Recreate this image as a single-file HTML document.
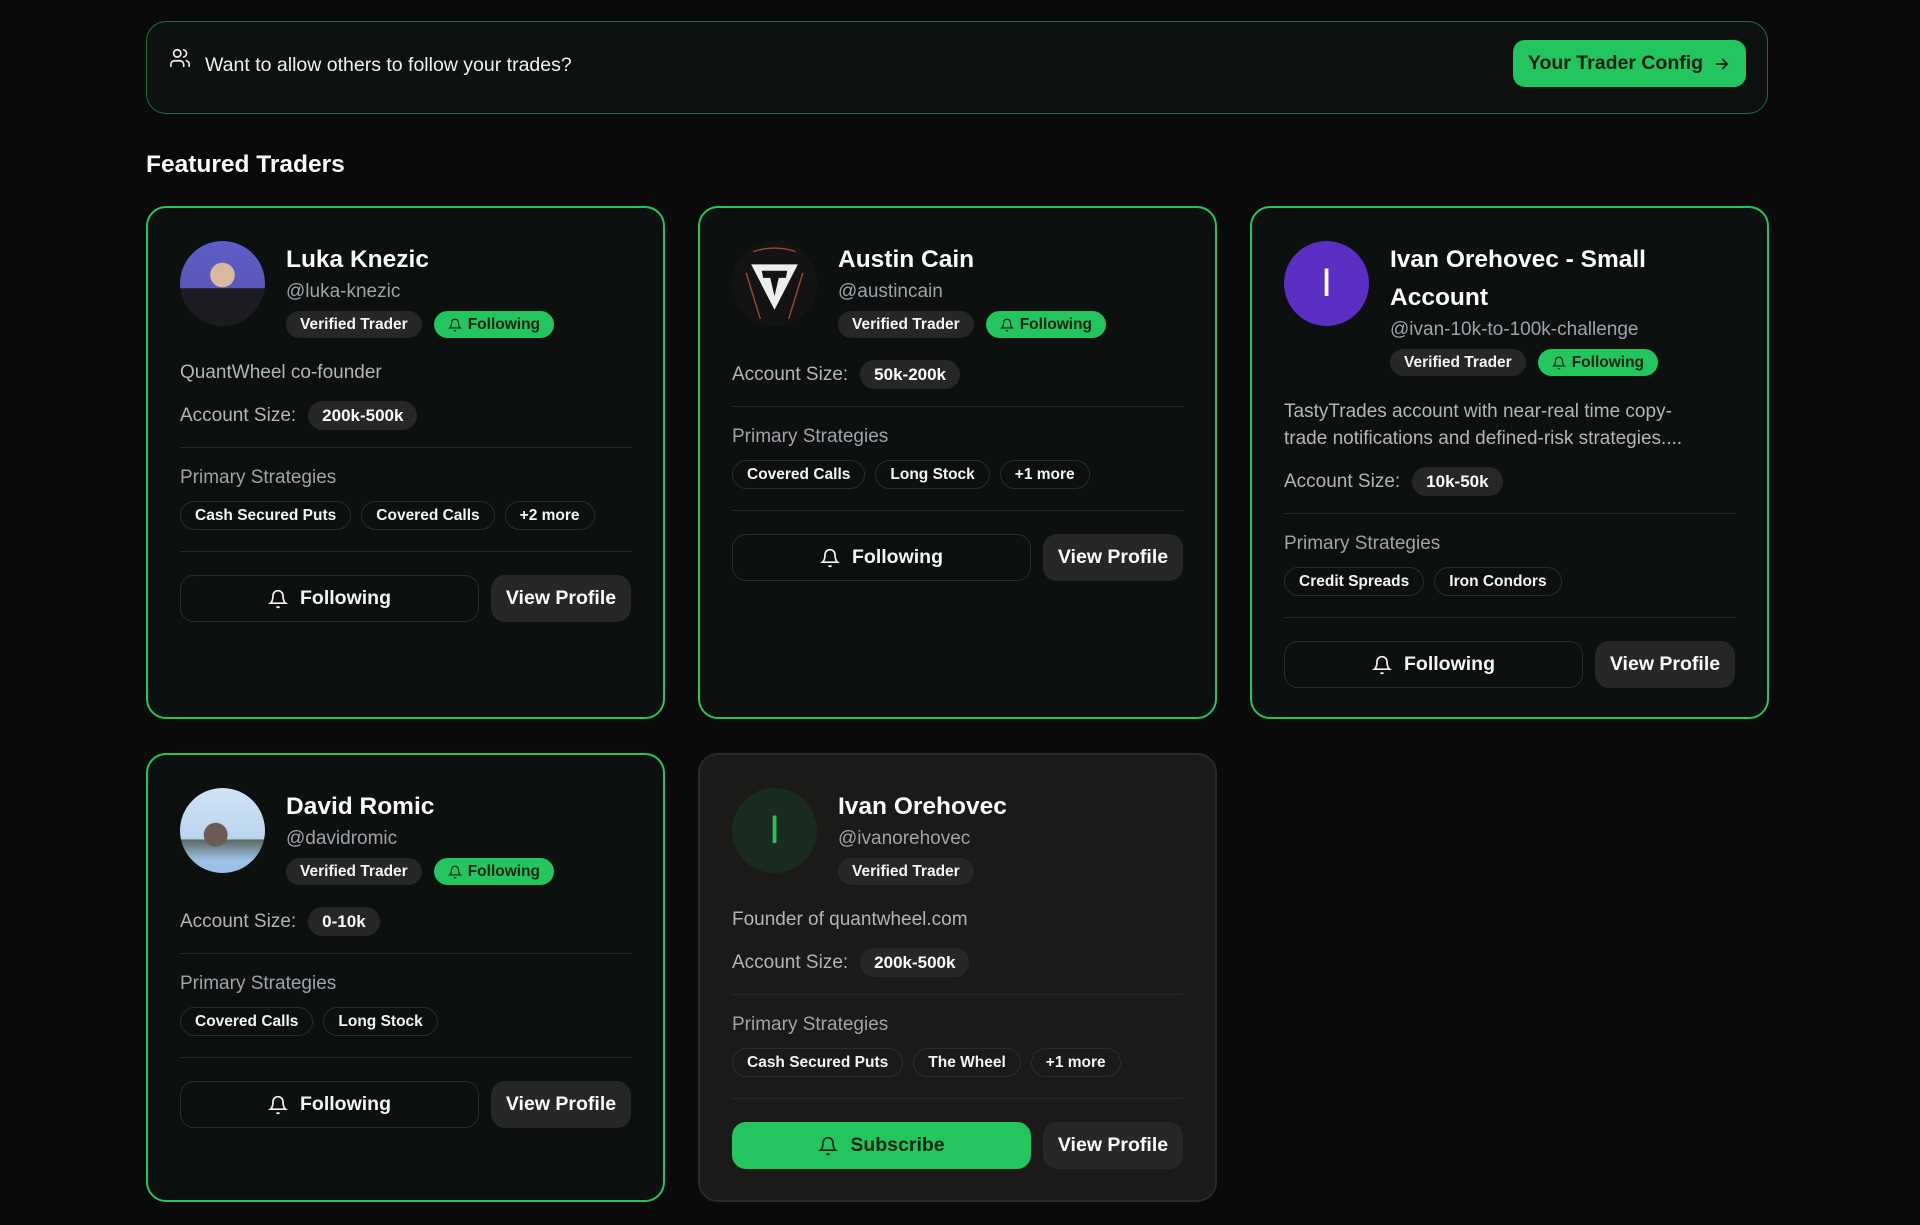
<!DOCTYPE html>
<html><head><meta charset="utf-8"><style>
*{box-sizing:border-box;margin:0;padding:0}
body{width:1920px;height:1225px;background:#0a0a0a;font-family:"Liberation Sans",sans-serif;color:#fafafa;position:relative;overflow:hidden}
.banner{position:absolute;left:146px;top:21px;width:1622px;height:93px;border:1.5px solid #1f6b3c;border-radius:20px;background:#0d1210}
.banner .t{position:absolute;left:58px;top:0;line-height:86px;font-size:19.5px;color:#f1f1f1}
.banner svg.ic{position:absolute;left:22px;top:25px}
.cfg{position:absolute;right:21px;top:18px;width:233px;height:47px;border-radius:12px;background:#22c55e;color:#0a1f12;font-size:19.5px;font-weight:600;display:flex;align-items:center;justify-content:center;gap:10px}
h2{position:absolute;left:146px;top:149px;font-size:24.5px;font-weight:600;line-height:32px}
.card{position:absolute;width:519px;border:2.5px solid #22c55e;border-radius:20px;background:#0c100e;padding:33px 32px 0 32px}
.card.plain{border:2px solid #2a2a2a;background:#1c1a19}
.hd{display:flex;gap:21px}
.av{width:85px;height:85px;border-radius:50%;flex:none;display:flex;align-items:center;justify-content:center;font-size:40px;overflow:hidden}
.nm{font-size:24.5px;font-weight:600;line-height:38px}
.hn{font-size:19px;color:#a1a1aa;line-height:26px}
.bd{display:flex;gap:12px;margin-top:6px}
.b{height:27px;border-radius:14px;padding:0 14px;font-size:15.5px;font-weight:600;display:flex;align-items:center;background:#27272a;color:#f4f4f5}
.b.g{background:#22c55e;color:#0b2414;gap:6px;padding:0 14px}
.desc{font-size:19px;color:#b4b4b8;line-height:27px;margin-top:21px}
.acc{display:flex;align-items:center;gap:12px;font-size:19px;color:#b4b4b8;margin-top:15px;height:29px}
.acc.first{margin-top:22px}
.acc span.p{background:#27272a;color:#fafafa;font-weight:600;font-size:17px;height:29px;border-radius:15px;padding:0 14px;display:flex;align-items:center}
.hr{height:1px;background:#26282a;margin-top:17px}
.ps{font-size:19px;color:#a1a1aa;line-height:29px;margin-top:15px}
.pills{display:flex;gap:10px;margin-top:9px}
.pl{height:29px;border:1.5px solid #2a2d2f;border-radius:15px;padding:0 14px;font-size:15.5px;font-weight:600;display:flex;align-items:center;color:#f4f4f5}
.hr2{height:1px;background:#26282a;margin-top:21px}
.btns{display:flex;gap:12px;margin-top:23px}
.fb{width:299px;height:47px;border:1.5px solid #2a2d2f;border-radius:14px;display:flex;align-items:center;justify-content:center;gap:12px;font-size:19.5px;font-weight:600;color:#f4f4f5}
.fb.s{background:#22c55e;border-color:#22c55e;color:#0b2414}
.vp{width:140px;height:47px;border-radius:14px;background:#27272a;display:flex;align-items:center;justify-content:center;font-size:19.5px;font-weight:600}
</style></head><body>
<div class="banner">
<svg class="ic" width="22" height="22" viewBox="0 0 24 24" fill="none" stroke="#eee" stroke-width="1.8" stroke-linecap="round"><circle cx="9" cy="7" r="4"/><path d="M2 21v-2a4 4 0 0 1 4-4h6a4 4 0 0 1 4 4v2"/><path d="M16 3.1a4 4 0 0 1 0 7.8"/><path d="M22 21v-2a4 4 0 0 0-3-3.9"/></svg>
<div class="t">Want to allow others to follow your trades?</div>
<div class="cfg">Your Trader Config <svg width="18" height="18" viewBox="0 0 24 24" fill="none" stroke="#0a1f12" stroke-width="2.2" stroke-linecap="round"><path d="M5 12h14M13 6l6 6-6 6"/></svg></div>
</div>
<h2>Featured Traders</h2>

<div class="card" style="left:146px;top:206px;height:513px">
 <div class="hd"><div class="av" style="background:radial-gradient(circle at 50% 40%,#d9b8a0 0 18%,transparent 19%),linear-gradient(180deg,#5b5fc7 0,#5a57b8 55%,#1c1c22 56%)"></div>
 <div><div class="nm">Luka Knezic</div><div class="hn">@luka-knezic</div>
 <div class="bd"><div class="b">Verified Trader</div><div class="b g"><svg width="14" height="14" viewBox="0 0 24 24" fill="none" stroke="#0b2414" stroke-width="2"><path d="M6 8a6 6 0 0 1 12 0c0 7 3 9 3 9H3s3-2 3-9"/><path d="M10.3 21a1.9 1.9 0 0 0 3.4 0"/></svg>Following</div></div></div></div>
 <div class="desc">QuantWheel co-founder</div>
 <div class="acc">Account Size: <span class="p">200k-500k</span></div>
 <div class="hr"></div>
 <div class="ps">Primary Strategies</div>
 <div class="pills"><div class="pl">Cash Secured Puts</div><div class="pl">Covered Calls</div><div class="pl">+2 more</div></div>
 <div class="hr2"></div>
 <div class="btns"><div class="fb"><svg width="20" height="20" viewBox="0 0 24 24" fill="none" stroke="#f4f4f5" stroke-width="2"><path d="M6 8a6 6 0 0 1 12 0c0 7 3 9 3 9H3s3-2 3-9"/><path d="M10.3 21a1.9 1.9 0 0 0 3.4 0"/></svg>Following</div><div class="vp">View Profile</div></div>
</div>

<div class="card" style="left:698px;top:206px;height:513px">
 <div class="hd"><div class="av" style="background:#141414"><svg width="85" height="85" viewBox="0 0 120 120"><circle cx="60" cy="60" r="58" fill="#131313"/><path d="M20 45 L40 110 M100 45 L80 110 M30 15 Q60 5 90 15" stroke="#9a4a2a" stroke-width="2" fill="none"/><path d="M27 33 L93 33 L60 97 Z" fill="#eee"/><path d="M42 42 L78 42 L76 52 L66 52 L60 78 L54 52 L44 52 Z" fill="#131313"/></svg></div>
 <div><div class="nm">Austin Cain</div><div class="hn">@austincain</div>
 <div class="bd"><div class="b">Verified Trader</div><div class="b g"><svg width="14" height="14" viewBox="0 0 24 24" fill="none" stroke="#0b2414" stroke-width="2"><path d="M6 8a6 6 0 0 1 12 0c0 7 3 9 3 9H3s3-2 3-9"/><path d="M10.3 21a1.9 1.9 0 0 0 3.4 0"/></svg>Following</div></div></div></div>
 <div class="acc first">Account Size: <span class="p">50k-200k</span></div>
 <div class="hr"></div>
 <div class="ps">Primary Strategies</div>
 <div class="pills"><div class="pl">Covered Calls</div><div class="pl">Long Stock</div><div class="pl">+1 more</div></div>
 <div class="hr2"></div>
 <div class="btns"><div class="fb"><svg width="20" height="20" viewBox="0 0 24 24" fill="none" stroke="#f4f4f5" stroke-width="2"><path d="M6 8a6 6 0 0 1 12 0c0 7 3 9 3 9H3s3-2 3-9"/><path d="M10.3 21a1.9 1.9 0 0 0 3.4 0"/></svg>Following</div><div class="vp">View Profile</div></div>
</div>

<div class="card" style="left:1250px;top:206px;height:513px">
 <div class="hd"><div class="av" style="background:#5b2fc4;color:#fff">I</div>
 <div><div class="nm">Ivan Orehovec - Small<br>Account</div><div class="hn">@ivan-10k-to-100k-challenge</div>
 <div class="bd"><div class="b">Verified Trader</div><div class="b g"><svg width="14" height="14" viewBox="0 0 24 24" fill="none" stroke="#0b2414" stroke-width="2"><path d="M6 8a6 6 0 0 1 12 0c0 7 3 9 3 9H3s3-2 3-9"/><path d="M10.3 21a1.9 1.9 0 0 0 3.4 0"/></svg>Following</div></div></div></div>
 <div class="desc" style="margin-top:22px">TastyTrades account with near-real time copy-<br>trade notifications and defined-risk strategies....</div>
 <div class="acc">Account Size: <span class="p">10k-50k</span></div>
 <div class="hr"></div>
 <div class="ps">Primary Strategies</div>
 <div class="pills"><div class="pl">Credit Spreads</div><div class="pl">Iron Condors</div></div>
 <div class="hr2"></div>
 <div class="btns"><div class="fb"><svg width="20" height="20" viewBox="0 0 24 24" fill="none" stroke="#f4f4f5" stroke-width="2"><path d="M6 8a6 6 0 0 1 12 0c0 7 3 9 3 9H3s3-2 3-9"/><path d="M10.3 21a1.9 1.9 0 0 0 3.4 0"/></svg>Following</div><div class="vp">View Profile</div></div>
</div>

<div class="card" style="left:146px;top:753px;height:449px">
 <div class="hd"><div class="av" style="background:radial-gradient(circle at 42% 55%,#6b5a55 0 17%,transparent 18%),linear-gradient(180deg,#cfe3f5 0,#b9d5ee 60%,#5b6a60 61%,#9cc0e6 85%)"></div>
 <div><div class="nm">David Romic</div><div class="hn">@davidromic</div>
 <div class="bd"><div class="b">Verified Trader</div><div class="b g"><svg width="14" height="14" viewBox="0 0 24 24" fill="none" stroke="#0b2414" stroke-width="2"><path d="M6 8a6 6 0 0 1 12 0c0 7 3 9 3 9H3s3-2 3-9"/><path d="M10.3 21a1.9 1.9 0 0 0 3.4 0"/></svg>Following</div></div></div></div>
 <div class="acc first">Account Size: <span class="p">0-10k</span></div>
 <div class="hr"></div>
 <div class="ps">Primary Strategies</div>
 <div class="pills"><div class="pl">Covered Calls</div><div class="pl">Long Stock</div></div>
 <div class="hr2"></div>
 <div class="btns"><div class="fb"><svg width="20" height="20" viewBox="0 0 24 24" fill="none" stroke="#f4f4f5" stroke-width="2"><path d="M6 8a6 6 0 0 1 12 0c0 7 3 9 3 9H3s3-2 3-9"/><path d="M10.3 21a1.9 1.9 0 0 0 3.4 0"/></svg>Following</div><div class="vp">View Profile</div></div>
</div>

<div class="card plain" style="left:698px;top:753px;height:449px">
 <div class="hd"><div class="av" style="background:#1a2b20;color:#22c55e">I</div>
 <div><div class="nm">Ivan Orehovec</div><div class="hn">@ivanorehovec</div>
 <div class="bd"><div class="b">Verified Trader</div></div></div></div>
 <div class="desc">Founder of quantwheel.com</div>
 <div class="acc">Account Size: <span class="p">200k-500k</span></div>
 <div class="hr"></div>
 <div class="ps">Primary Strategies</div>
 <div class="pills"><div class="pl">Cash Secured Puts</div><div class="pl">The Wheel</div><div class="pl">+1 more</div></div>
 <div class="hr2"></div>
 <div class="btns"><div class="fb s"><svg width="20" height="20" viewBox="0 0 24 24" fill="none" stroke="#0b2414" stroke-width="2"><path d="M6 8a6 6 0 0 1 12 0c0 7 3 9 3 9H3s3-2 3-9"/><path d="M10.3 21a1.9 1.9 0 0 0 3.4 0"/></svg>Subscribe</div><div class="vp">View Profile</div></div>
</div>
</body></html>
